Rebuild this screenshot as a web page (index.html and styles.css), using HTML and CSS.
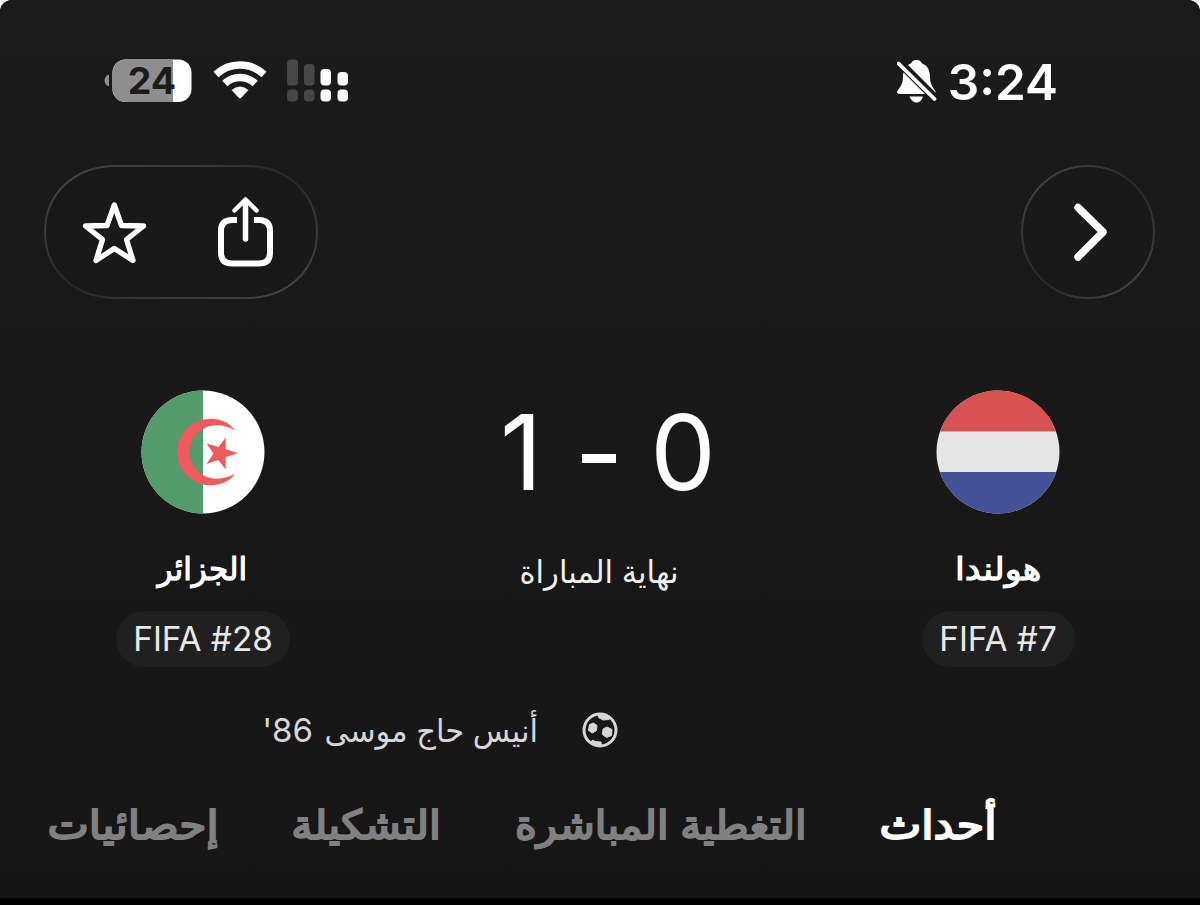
FILE: index.html
```
<!DOCTYPE html>
<html lang="ar" dir="rtl">
<head>
<meta charset="utf-8">
<title>هولندا - الجزائر</title>
<link rel="stylesheet" href="styles.css">
</head>
<body>
<div class="screen">
  <header class="status">
    <div class="status-group">
      <svg class="battery" width="88" height="44" viewBox="0 0 88 44">
        <path d="M5 15.5C-1 17.500-1 25.500 5 27.500Z" fill="#8e8e8e"/>
        <rect x="8.500" y="0.500" width="79" height="42.500" rx="13" fill="#fff"/>
        <path d="M21.500 0.500H69V43H21.500A13 13 0 0 1 8.500 30V13.500A13 13 0 0 1 21.500 0.500Z" fill="#8e8e8e"/>
        <text x="48" y="34.800" direction="ltr" text-anchor="middle" class="battery-text">24</text>
      </svg>
      <svg class="wifi" width="54" height="40" viewBox="0 0 54 40">
        <g fill="none" stroke="#fff" stroke-width="7.500">
          <path d="M3 14.500A35.300 35.300 0 0 1 51 14.500"/>
          <path d="M11.800 23.500A22 22 0 0 1 42.200 23.500"/>
        </g>
        <path d="M18.500 30Q27 23 35.500 30L28.500 37.500Q27 39 25.500 37.500Z" fill="#fff"/>
      </svg>
      <svg class="signal" width="61" height="43" viewBox="0 0 61 43">
        <g fill="#474747"><rect y=".5" width="11" height="26" rx="3.500"/><rect x="17" y="5" width="10.500" height="21.500" rx="3.500"/><rect y="30.500" width="11" height="12" rx="4"/><rect x="17" y="30.500" width="10.500" height="12" rx="4"/></g>
        <g fill="#fff"><rect x="33.500" y="10" width="10.500" height="16.500" rx="4"/><rect x="50.500" y="13" width="10.500" height="13.500" rx="4"/><rect x="33.500" y="30.500" width="10.500" height="12" rx="4"/><rect x="50.500" y="30.500" width="10.500" height="12" rx="4"/></g>
      </svg>
    </div>
    <div class="status-group clock">
      <svg class="bell" width="40" height="44" viewBox="0 0 40 44">
        <path d="M0 31.500C2 28 6 25 6 17C6 9 10 4.500 14 3.500C15 1 17 0 19.500 0S24 1 25 3.500C30 5 33 10 33 17C33 25 37 28 38.500 31.500Q39 34 36 34H3Q0 34 0 31.500ZM12.500 36.500H26C25 40 22.500 42.500 19.500 42.500S14 40 12.500 36.500Z" fill="#fff"/>
        <path d="M-1 -1L41 41" stroke="#1a1a1a" stroke-width="8.500"/>
        <path d="M1.500 3.500L37.500 39" stroke="#fff" stroke-width="3.800" stroke-linecap="round"/>
      </svg>
      <span class="time">3:24</span>
    </div>
  </header>

  <nav class="toolbar">
    <svg width="134" height="134" viewBox="0 0 134 134">
      <defs><linearGradient id="rim" x1="0" y1="0" x2="1" y2="1"><stop offset="0" stop-color="#484848"/><stop offset=".35" stop-color="#333"/><stop offset=".5" stop-color="#282828"/><stop offset=".65" stop-color="#333"/><stop offset="1" stop-color="#484848"/></linearGradient></defs>
      <circle cx="67" cy="67" r="66" fill="#191919" stroke="url(#rim)" stroke-width="2"/>
      <path d="M57 42.500L82 67L57 92" fill="none" stroke="#fff" stroke-width="7.500" stroke-linecap="round" stroke-linejoin="round"/>
    </svg>
    <svg width="274" height="134" viewBox="0 0 274 134">
      <path d="M72 1H202C244 1 273 29 273 67S244 133 202 133H72C30 133 1 105 1 67S30 1 72 1Z" fill="#191919" stroke="url(#rim)" stroke-width="2"/>
      <path d="M70.300 40L77.500 60.500L99.500 61L82.500 74.500L89 95.500L70.300 83.500L52 95.500L58.500 74.500L41.500 61L63 60.500Z" fill="none" stroke="#fff" stroke-width="5.300" stroke-linejoin="round"/>
      <g fill="none" stroke="#fff" stroke-linecap="round" stroke-linejoin="round"><path stroke-width="5.500" d="M201.500 74V37"/><path stroke-width="4.500" d="M190.500 45.500L201.500 34.500L212.500 45.500"/></g>
      <path d="M193 55H188Q177 55 177 66V87.500Q177 98.500 188 98.500H215Q226 98.500 226 87.500V66Q226 55 215 55H210" fill="none" stroke="#fff" stroke-width="6"/>
    </svg>
  </nav>

  <main class="match">
    <section class="team">
      <svg width="124" height="124" viewBox="0 0 124 124">
        <clipPath id="disc"><circle cx="62" cy="62" r="61.500"/></clipPath>
        <g clip-path="url(#disc)"><path fill="#e6e6e6" d="M0 0h124v124H0z"/><path fill="#d75351" d="M0 0h124v41.500H0z"/><path fill="#445198" d="M0 82h124v42H0z"/></g>
      </svg>
      <h2 class="team-name"><span class="fit name-home">هولندا</span></h2>
      <span class="rank rank-short" dir="ltr">FIFA #7</span>
    </section>
    <section class="result">
      <div class="score" dir="ltr"><span>1</span><i class="dash"></i><span>0</span></div>
      <p class="phase"><span class="fit">نهاية المباراة</span></p>
    </section>
    <section class="team">
      <svg width="124" height="124" viewBox="0 0 124 124">
        <g clip-path="url(#disc)"><path fill="#fff" d="M0 0h124v124H0z"/><path fill="#539b6d" d="M0 0h62v124H0z"/></g>
        <path fill="#f05a5d" d="M94 40.500C85 27 64 25 50 35A33 33 0 0 0 50 89C64 99 85 97 94 83.500C85 89 72 91 62 85C44 75 44 49 62 39C72 33 85 35 94 40.500ZM97 63L84.500 67.300L84.800 79.500L77.200 70L65.500 74L72.500 63.500L65.500 53.500L77.500 57L84.800 47.500L84.700 59.200Z"/>
      </svg>
      <h2 class="team-name"><span class="fit name-away">الجزائر</span></h2>
      <span class="rank" dir="ltr">FIFA #28</span>
    </section>
  </main>

  <div class="scorer">
    <svg width="36" height="36" viewBox="0 0 36 36">
      <circle cx="18" cy="18" r="16" fill="none" stroke="#d6d6d6" stroke-width="3"/>
      <path fill="#d6d6d6" stroke="#d6d6d6" stroke-linejoin="round" d="M16 2.500L28 5L27 7.500L21 8L16.500 5.500ZM7.500 12.500L11.500 11L15 13.500L14.500 18.500L10.500 21L6.500 18.500ZM25 15L30 17.500L29.500 23.500L24.500 25.500L20.500 22.500L21 17ZM8.500 30L11 28L13 29.500L19 30L19.500 34H14Z"/>
    </svg>
    <p class="goal"><span class="fit scorer-name">أنيس حاج موسى</span> <bdi class="minute" dir="rtl">86'</bdi></p>
  </div>

  <nav class="tabs">
    <a class="tab tab-events"><span class="fit">أحداث</span></a>
    <a class="tab tab-live"><span class="fit">التغطية المباشرة</span></a>
    <a class="tab tab-lineup"><span class="fit">التشكيلة</span></a>
    <a class="tab tab-stats"><span class="fit">إحصائيات</span></a>
  </nav>
</div>
</body>
</html>
```
FILE: styles.css
```
* { box-sizing: border-box; }
html { background: #f4f6f6; }
body { margin: 0; height: 905px; overflow: hidden; border-radius: 12px 12px 0 0; background: #000; color: #fff; font-family: Inter, "DejaVu Sans", sans-serif; }
.screen { height: 898px; overflow: hidden; background: linear-gradient(#1b1b1b, #161616); }
h2, p { margin: 0; font-weight: inherit; }
svg { display: block; flex: none; }
.fit { display: inline-block; white-space: nowrap; transform-origin: right center; }

.status { display: flex; flex-direction: row-reverse; justify-content: space-between; padding: 59px 142px 0 104px; height: 165px; }
.status-group { display: flex; direction: ltr; align-items: flex-start; }
.wifi { margin: 1px 0 0 21px; }
.signal { margin: 0 0 0 20px; }
.battery-text { font: 700 37.500px Inter, sans-serif; fill: #1b1b1b; }
.clock { gap: 11px; }
.bell { margin-top: 1px; }
.time { font-size: 49.500px; font-weight: 600; line-height: 47px; }

.toolbar { display: flex; justify-content: space-between; padding: 0 45px 0 44px; height: 225px; }

.match { display: flex; justify-content: space-between; padding: 0 102px 0 103px; height: 310px; }
.team { width: 200px; display: flex; flex-direction: column; align-items: center; }
.team-name { font-size: 32px; height: 60px; margin-top: 37px; line-height: 36px; -webkit-text-stroke: 1.100px currentColor; }
.team-name .fit { transform-origin: center; }
.name-home { transform: scaleX(1.1); }
.name-away { transform: translateX(-1px) scaleX(.97); }
.rank { display: flex; align-items: center; justify-content: center; width: 174px; height: 56px; border-radius: 28px; background: #202020; color: #e9e9e9; font-size: 33.300px; }
.rank-short { width: 153px; }
.result { display: flex; flex-direction: column; align-items: center; }
.score { display: flex; align-items: center; height: 124px; padding-left: 15px; font-size: 104px; }
.dash { width: 34px; height: 9px; margin: 12px 34px 0 40px; background: #fff; }
.phase { font-size: 32px; margin-top: 40px; padding-right: 2px; line-height: 36px; color: #f0f0f0; }
.phase .fit { transform: scaleX(.957); transform-origin: center; }

.scorer { display: flex; align-items: center; padding-right: 582px; gap: 44px; height: 59px; color: #d6d6d6; }
.goal { display: flex; align-items: baseline; font-size: 32px; }
.scorer-name { width: 212px; transform: scaleX(.955); }
.minute { margin-right: 13px; font-size: 33px; }

.tabs { display: flex; height: 100px; padding: 42px 203px 0 0; gap: 74px; font-size: 40px; line-height: 48px; color: #808080; -webkit-text-stroke: 2px currentColor; }
.tab { flex: none; }
.tab-events { width: 117px; color: #fff; }
.tab-live { width: 291px; }
.tab-lineup { width: 148px; }
.tab-stats { width: 172px; }
.tab-events .fit { transform: scaleX(1.11); }
.tab-live .fit { transform: scaleX(1.043); }
.tab-lineup .fit { transform: scaleX(1.07); }
.tab-stats .fit { transform: scaleX(1.1); }
```
